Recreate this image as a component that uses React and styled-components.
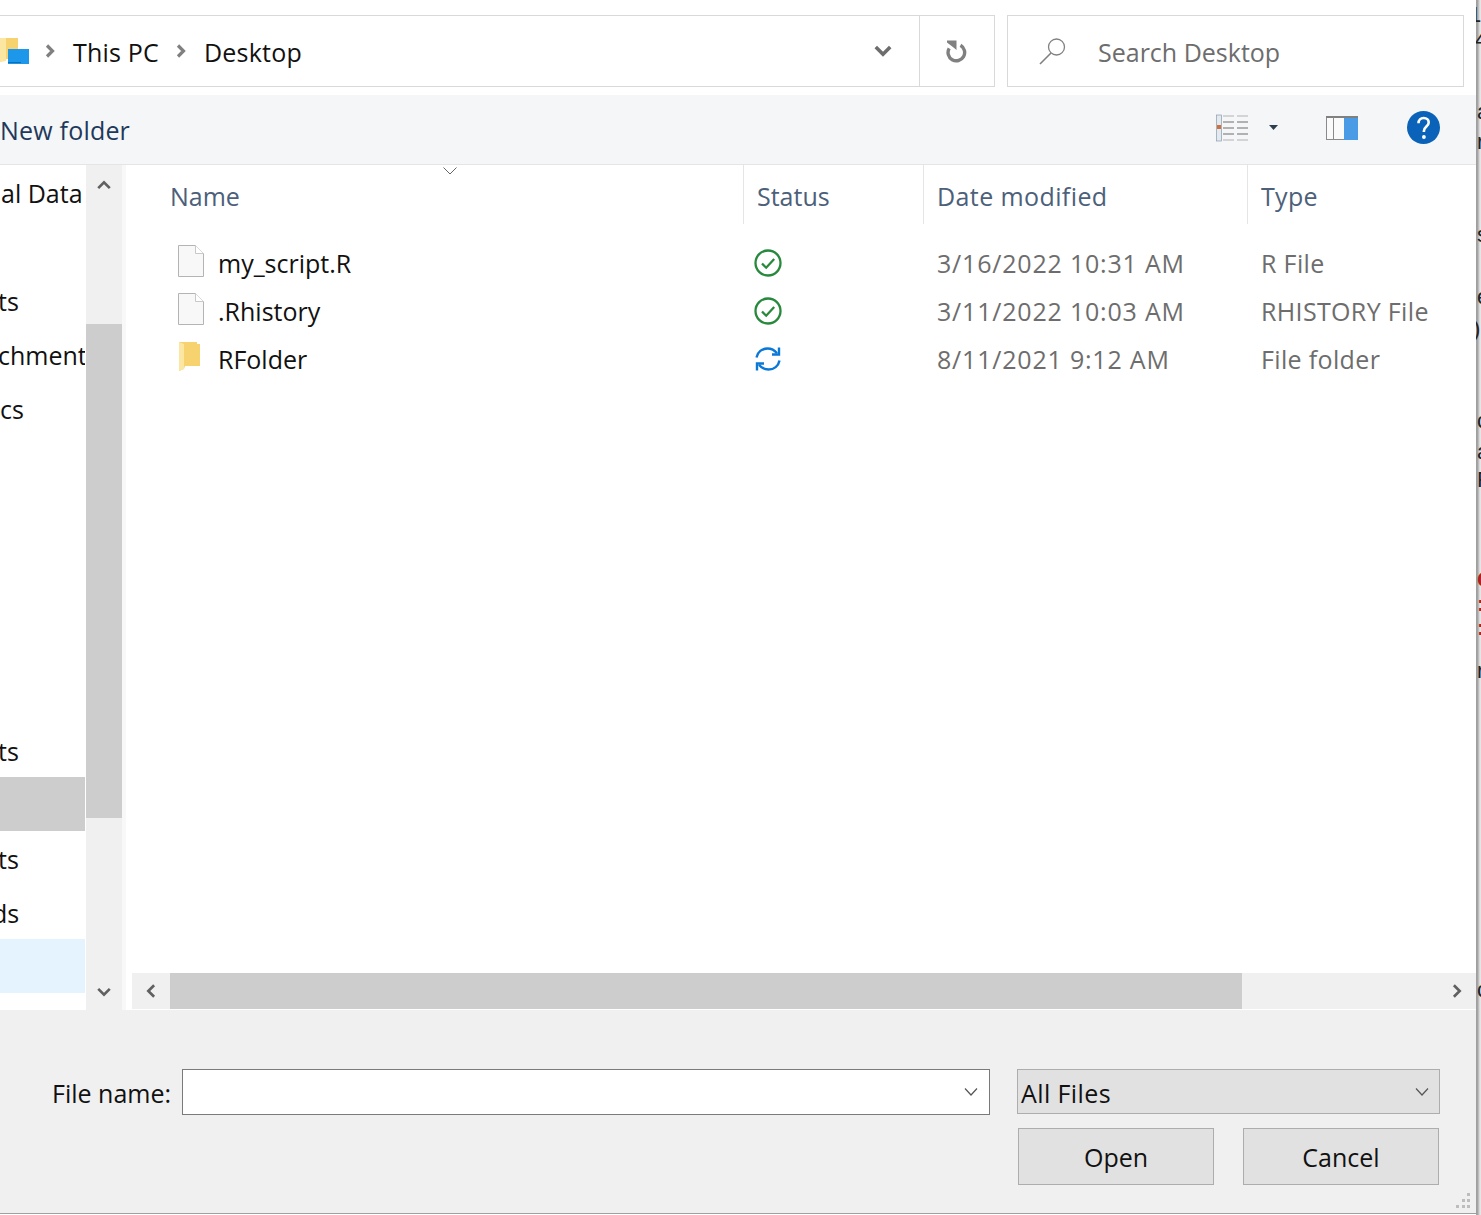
import React from "react";
import styled, { createGlobalStyle } from "styled-components";

const UI_FONT = `"Open Sans", "Noto Sans", sans-serif`;

const GlobalStyle = createGlobalStyle`
  html, body {
    margin: 0;
    padding: 0;
    background: #fff;
    overflow: hidden;
  }
  #root {
    width: 1481px;
    height: 1215px;
  }
`;

const Page = styled.div`
  display: flex;
  width: 1481px;
  height: 1215px;
  overflow: hidden;
  font-family: ${UI_FONT};
  font-size: 25px;
  color: #111;
`;

const Dialog = styled.div`
  width: 1476px;
  height: 1214px;
  display: flex;
  flex-direction: column;
  flex: none;
`;

/* window behind the dialog, only a sliver of it shows */
const BehindWindow = styled.div`
  width: 5px;
  flex: none;
  background: linear-gradient(to right, #9c9c9c 0, #a8a8a8 2px, #d2d2d2 3px, #ececec 5px);
  overflow: hidden;
  display: flex;
  flex-direction: column;
  font-family: "Liberation Sans", sans-serif;
  font-size: 22px;
  line-height: 24px;
`;

const BehindLetter = styled.span`
  display: block;
  height: 24px;
  margin-top: ${(p) => p.$gap}px;
  margin-left: ${(p) => p.$shift || 1}px;
  color: ${(p) => (p.$red ? "#b02020" : "#222")};
  font-weight: ${(p) => (p.$red ? 700 : 400)};
  white-space: nowrap;
`;

const AddressRow = styled.div`
  height: 95px;
  padding-top: 15px;
  box-sizing: border-box;
  display: flex;
  background: #fff;
  flex: none;
`;

const AddressBox = styled.div`
  width: 995px;
  height: 72px;
  box-sizing: border-box;
  border: 1px solid #d9d9d9;
  border-left: 0;
  display: flex;
  align-items: center;
`;

const Crumbs = styled.div`
  flex: 1;
  display: flex;
  align-items: center;
  min-width: 0;
`;

const CrumbText = styled.span`
  margin-left: ${(p) => p.$left}px;
  padding-top: 2px;
  letter-spacing: 0.2px;
`;

const CrumbArrow = styled.svg`
  width: 10px;
  height: 14px;
  margin-left: ${(p) => p.$left}px;
  flex: none;
`;

const ChevronCell = styled.div`
  width: 74px;
  display: flex;
  justify-content: center;
  padding-left: 2px;
  box-sizing: border-box;
`;

const RefreshCell = styled.div`
  width: 75px;
  height: 100%;
  box-sizing: border-box;
  border-left: 1px solid #d9d9d9;
  display: flex;
  align-items: center;
  justify-content: center;
`;

const SearchBox = styled.div`
  width: 457px;
  height: 72px;
  margin-left: 12px;
  box-sizing: border-box;
  border: 1px solid #d9d9d9;
  display: flex;
  align-items: center;
  padding-left: 30px;
  color: #6d6d6d;
  gap: 30px;
`;

const SearchText = styled.span`
  padding-top: 2px;
`;

const Toolbar = styled.div`
  height: 70px;
  flex: none;
  box-sizing: border-box;
  background: #f5f6f7;
  border-bottom: 1px solid #e5e5e5;
  display: flex;
  align-items: center;
  padding: 0 36px 0 0;
`;

const NewFolder = styled.span`
  color: #1e395b;
  flex: 1;
  letter-spacing: 0.2px;
`;

const ToolGroup = styled.div`
  display: flex;
  align-items: center;
  margin-bottom: 4px;
`;

const ToolIcon = styled.svg`
  flex: none;
  margin-left: ${(p) => p.$left}px;
`;

const Body = styled.div`
  flex: 1;
  display: flex;
  min-height: 0;
  background: #fff;
`;

const Sidebar = styled.div`
  width: 85px;
  flex: none;
  overflow: hidden;
  padding-top: 2px;
  box-sizing: border-box;
`;

const SideRow = styled.div`
  height: 54px;
  line-height: ${(p) => (p.$lower ? 56 : 52)}px;
  margin-top: ${(p) => p.$gap || 0}px;
  text-indent: ${(p) => p.$indent || 0}px;
  background: ${(p) => p.$bg || "transparent"};
  white-space: nowrap;
`;

const VScroll = styled.div`
  width: 36px;
  margin-left: 1px;
  flex: none;
  background: #f0f0f0;
  display: flex;
  flex-direction: column;
  justify-content: space-between;
  position: relative;
`;

const ScrollArrow = styled.div`
  height: 36px;
  display: flex;
  align-items: center;
  justify-content: center;
  flex: none;
  padding-top: ${(p) => p.$nudge || 0}px;
  box-sizing: border-box;
`;

const VThumb = styled.div`
  position: absolute;
  left: 0;
  right: 0;
  top: 159px;
  height: 494px;
  background: #cdcdcd;
`;

const Splitter = styled.div`
  width: 10px;
  flex: none;
  background: linear-gradient(to right, #f8f8f8 0, #f8f8f8 4px, #fff 4px);
`;

const ListPane = styled.div`
  flex: 1;
  min-width: 0;
  display: flex;
  flex-direction: column;
  position: relative;
`;

const SortCaret = styled.svg`
  position: absolute;
  left: 310px;
  top: 1px;
`;

const Columns = `612px 180px 324px 1fr`;

const HeaderRow = styled.div`
  display: grid;
  grid-template-columns: ${Columns};
  height: 59px;
  flex: none;
  color: #4c607a;
`;

const HeaderCell = styled.div`
  padding-left: ${(p) => p.$pad}px;
  padding-top: 14px;
  box-sizing: border-box;
  border-right: ${(p) => (p.$last ? "0" : "1px solid #e5e5e5")};
  line-height: 34px;
  letter-spacing: ${(p) => p.$spacing || 0}px;
`;

const FileRows = styled.div`
  flex: 1;
  padding-top: 15px;
`;

const FileRow = styled.div`
  display: grid;
  grid-template-columns: ${Columns};
  height: 48px;
  align-items: center;
`;

const NameCell = styled.div`
  display: flex;
  align-items: center;
  padding-left: 46px;
  gap: 14px;
  svg {
    margin-bottom: 4px;
  }
`;

const StatusCell = styled.div`
  display: flex;
  align-items: center;
  padding-left: 10px;
  height: 100%;
`;

const MutedCell = styled.div`
  color: #6d6d6d;
  padding-left: 13px;
  white-space: nowrap;
  letter-spacing: ${(p) => p.$spacing}px;
`;

const HScroll = styled.div`
  height: 36px;
  flex: none;
  background: #f0f0f0;
  display: flex;
  margin-bottom: 1px;
`;

const HArrow = styled.div`
  width: 38px;
  flex: none;
  display: flex;
  align-items: center;
  justify-content: center;
`;

const HThumb = styled.div`
  width: 1072px;
  flex: none;
  background: #cdcdcd;
`;

const HRest = styled.div`
  flex: 1;
`;

const Footer = styled.div`
  height: 204px;
  flex: none;
  box-sizing: border-box;
  background: #f0f0f0;
  border-bottom: 1px solid #a0a0a0;
  padding: 59px 36px 0 52px;
  position: relative;
`;

const FieldRow = styled.div`
  display: flex;
  align-items: flex-start;
`;

const FieldLabel = styled.span`
  width: 130px;
  line-height: 48px;
  white-space: nowrap;
`;

const Combo = styled.div`
  width: 808px;
  height: 46px;
  box-sizing: border-box;
  border: 1px solid #7a7a7a;
  background: #fff;
  display: flex;
  align-items: center;
  justify-content: flex-end;
  padding-right: 10px;
`;

const TypeSelect = styled.div`
  width: 423px;
  height: 45px;
  margin-left: 27px;
  box-sizing: border-box;
  border: 1px solid #adadad;
  background: #e1e1e1;
  display: flex;
  align-items: center;
  justify-content: space-between;
  padding: 0 9px 0 3px;
`;

const TypeText = styled.span`
  padding-top: 2px;
  letter-spacing: 0.4px;
`;

const ButtonRow = styled.div`
  display: flex;
  justify-content: flex-end;
  gap: 29px;
  margin-top: 11px;
  padding-right: 1px;
`;

const DialogButton = styled.div`
  width: 196px;
  height: 57px;
  box-sizing: border-box;
  border: 1px solid #adadad;
  background: #e1e1e1;
  display: flex;
  align-items: center;
  justify-content: center;
`;

const Grip = styled.svg`
  position: absolute;
  right: 4px;
  bottom: 3px;
`;

const Chevron = ({ dir = "down", size = 18, color = "#666", width = 3 }) => {
  const rot = { down: 0, up: 180, left: 90, right: -90 }[dir];
  return (
    <svg width={size} height={size} viewBox="0 0 18 18" style={{ transform: `rotate(${rot}deg)` }}>
      <path d="M2.5 5.5 9 12l6.5-6.5" fill="none" stroke={color} strokeWidth={width} />
    </svg>
  );
};

const ThinChevron = () => (
  <svg width="16" height="10" viewBox="0 0 16 10">
    <path d="M2 1.5 8 8l6-6.5" fill="none" stroke="#555" strokeWidth="1.2" />
  </svg>
);

const CrumbGlyph = ({ left }) => (
  <CrumbArrow $left={left} viewBox="0 0 10 14">
    <path d="M2 1.5 7.5 7 2 12.5" fill="none" stroke="#808080" strokeWidth="3.2" />
  </CrumbArrow>
);

const DesktopFolder = () => (
  <svg width="29" height="29" viewBox="0 0 29 29" style={{ flex: "none" }}>
    <path d="M0 1h18v21H7l-7 3z" fill="#f6d36e" />
    <path d="M0 1h6v23l-6 1z" fill="#fbe6a2" />
    <rect x="8" y="12" width="21" height="15" fill="#1c97ea" />
    <rect x="8" y="25" width="13" height="1" fill="#0f6cb5" />
  </svg>
);

const RefreshIcon = () => (
  <svg width="22" height="24" viewBox="0 0 22 24">
    <path d="M14.5 6.3a8.3 8.3 0 1 1-11.3 3" fill="none" stroke="#808080" strokeWidth="3.4" />
    <path d="M1 1.5h9.5V11L7.5 8.5 1 3.5z" fill="#808080" />
  </svg>
);

const SearchIcon = () => (
  <svg width="30" height="30" viewBox="0 0 30 30" style={{ flex: "none" }}>
    <circle cx="18.5" cy="11" r="8" fill="none" stroke="#808080" strokeWidth="1.3" />
    <path d="M13 17 2 28" stroke="#808080" strokeWidth="1.6" />
  </svg>
);

const ViewIcon = () => (
  <ToolIcon $left={0} width="32" height="28" viewBox="0 0 32 28">
    <rect x="0.5" y="1" width="5" height="26" fill="#e4e9ef" stroke="#8b9bab" strokeWidth="0.7" />
    <rect x="1" y="11" width="4" height="4" fill="#d0703c" />
    {[2, 8, 14, 20, 26].map((y, i) => (
      <g key={y} stroke={i === 0 || i === 4 ? "#c8c8c8" : "#9a9a9a"} strokeWidth="1.5">
        <path d={`M7 ${y}h11`} />
        <path d={`M21 ${y}h11`} />
      </g>
    ))}
  </ToolIcon>
);

const DropCaret = () => (
  <ToolIcon $left={21} width="9" height="5" viewBox="0 0 9 5">
    <path d="M0 0h9L4.5 5z" fill="#2c3e50" />
  </ToolIcon>
);

const PreviewIcon = () => (
  <ToolIcon $left={48} width="32" height="24" viewBox="0 0 32 24">
    <rect x="0.5" y="0.5" width="31" height="23" fill="#fafafa" stroke="#8a8a8a" />
    <rect x="0" y="0" width="32" height="2" fill="#808080" />
    <path d="M7.5 1v22" stroke="#8a8a8a" />
    <rect x="18" y="2" width="14" height="22" fill="#4a9be6" />
  </ToolIcon>
);

const HelpIcon = () => (
  <ToolIcon $left={49} width="33" height="33" viewBox="0 0 33 33">
    <circle cx="16.5" cy="16.5" r="16.5" fill="#0a63b8" />
    <path d="M11.5 12.2c0-3.2 2.2-5.2 5.2-5.2 3 0 5 1.8 5 4.4 0 4-4.8 4.2-4.8 8.6v1" fill="none" stroke="#fff" strokeWidth="2.6" />
    <circle cx="16.9" cy="26" r="1.9" fill="#fff" />
  </ToolIcon>
);

const FileIcon = () => (
  <svg width="26" height="32" viewBox="0 0 26 32" style={{ flex: "none" }}>
    <path d="M.5.5h17l8 8v23H.5z" fill="#f8f8f8" stroke="#b4b4b4" />
    <path d="M17.5.5v8h8" fill="#fff" stroke="#c8c8c8" />
  </svg>
);

const FolderIcon = () => (
  <svg width="26" height="32" viewBox="0 0 26 32" style={{ flex: "none" }}>
    <path d="M1 1h18v2h3v22H7l-1 3-5 2z" fill="#f6d36e" />
    <path d="M1 1l5 2v25l-5 2z" fill="#fbe6a2" />
  </svg>
);

const SyncedIcon = () => (
  <svg width="28" height="28" viewBox="0 0 28 28">
    <circle cx="14" cy="14" r="12.5" fill="none" stroke="#27893c" strokeWidth="2.3" />
    <path d="M8 14.5l4.2 4.2L20.2 10" fill="none" stroke="#27893c" strokeWidth="2.3" />
  </svg>
);

const SyncingIcon = () => (
  <svg width="28" height="28" viewBox="0 0 28 28">
    <g fill="none" stroke="#0a78d7" strokeWidth="2.4">
      <path d="M2.5 12.5C3.5 7 8 3.5 13.5 3.5c4 0 7.2 1.8 9.5 4.8" />
      <path d="M25 2.5v7h-7" />
      <path d="M25.5 15.5c-1 5.5-5.5 9-11 9-4 0-7.2-1.8-9.500-4.800" />
      <path d="M3 25.5v-7h7" />
    </g>
  </svg>
);

const sideRows = [
  { text: "al Data", indent: 1 },
  { text: "" },
  { text: "ts", indent: -2 },
  { text: "chments", indent: -2 },
  { text: "cs" },
  { text: "ts", gap: 286, indent: -2, lower: true },
  { text: "", bg: "#cdcdcd" },
  { text: "ts", indent: -2, lower: true },
  { text: "ds", indent: -8, lower: true },
  { text: "", bg: "#e5f3ff" },
];

const files = [
  { name: "my_script.R", date: "3/16/2022 10:31 AM", type: "R File", icon: <FileIcon />, status: <SyncedIcon /> },
  { name: ".Rhistory", date: "3/11/2022 10:03 AM", type: "RHISTORY File", icon: <FileIcon />, status: <SyncedIcon /> },
  { name: "RFolder", date: "8/11/2021 9:12 AM", type: "File folder", icon: <FolderIcon />, status: <SyncingIcon /> },
];

const behind = [
  { ch: "1", gap: 3, shift: -7 },
  { ch: "4", gap: 1, shift: -1 },
  { ch: "a", gap: 48 },
  { ch: "r", gap: 6 },
  { ch: "s", gap: 69 },
  { ch: "e", gap: 38 },
  { ch: ")", gap: 8, shift: -3 },
  { ch: "c", gap: 68 },
  { ch: "a", gap: 7 },
  { ch: "R", gap: 4 },
  { ch: "G", gap: 76, red: true },
  { ch: ":", gap: 0, red: true },
  { ch: ":", gap: 0, red: true },
  { ch: "r", gap: 19 },
  { ch: "c", gap: 295 },
];

const App = () => {
  return (
    <>
      <GlobalStyle />
      <Page>
        <Dialog>
          <AddressRow>
            <AddressBox>
              <Crumbs>
                <DesktopFolder />
                <CrumbGlyph left={16} />
                <CrumbText $left={18}>This PC</CrumbText>
                <CrumbGlyph left={17} />
                <CrumbText $left={18}>Desktop</CrumbText>
              </Crumbs>
              <ChevronCell>
                <Chevron size={20} color="#6d6d6d" width={3.2} />
              </ChevronCell>
              <RefreshCell>
                <RefreshIcon />
              </RefreshCell>
            </AddressBox>
            <SearchBox>
              <SearchIcon />
              <SearchText>Search Desktop</SearchText>
            </SearchBox>
          </AddressRow>

          <Toolbar>
            <NewFolder>New folder</NewFolder>
            <ToolGroup>
              <ViewIcon />
              <DropCaret />
              <PreviewIcon />
              <HelpIcon />
            </ToolGroup>
          </Toolbar>

          <Body>
            <Sidebar>
              {sideRows.map((row, i) => (
                <SideRow key={i} $gap={row.gap} $bg={row.bg} $indent={row.indent} $lower={row.lower}>
                  {row.text}
                </SideRow>
              ))}
            </Sidebar>
            <VScroll>
              <VThumb />
              <ScrollArrow $nudge={4}>
                <Chevron dir="up" size={16} color="#606060" width={3} />
              </ScrollArrow>
              <ScrollArrow>
                <Chevron dir="down" size={16} color="#606060" width={3} />
              </ScrollArrow>
            </VScroll>
            <Splitter />
            <ListPane>
              <SortCaret width="16" height="10" viewBox="0 0 16 10">
                <path d="M1.5 1.5 8 8l6.5-6.5" fill="none" stroke="#666" strokeWidth="1" />
              </SortCaret>
              <HeaderRow>
                <HeaderCell $pad={38}>Name</HeaderCell>
                <HeaderCell $pad={13}>Status</HeaderCell>
                <HeaderCell $pad={13} $spacing={0.4}>Date modified</HeaderCell>
                <HeaderCell $pad={13} $last $spacing={0.3}>Type</HeaderCell>
              </HeaderRow>
              <FileRows>
                {files.map((file) => (
                  <FileRow key={file.name}>
                    <NameCell>
                      {file.icon}
                      <span>{file.name}</span>
                    </NameCell>
                    <StatusCell>{file.status}</StatusCell>
                    <MutedCell $spacing={0.8}>{file.date}</MutedCell>
                    <MutedCell $spacing={0.35}>{file.type}</MutedCell>
                  </FileRow>
                ))}
              </FileRows>
              <HScroll>
                <HArrow>
                  <Chevron dir="left" size={16} color="#606060" width={3} />
                </HArrow>
                <HThumb />
                <HRest />
                <HArrow>
                  <Chevron dir="right" size={16} color="#606060" width={3} />
                </HArrow>
              </HScroll>
            </ListPane>
          </Body>

          <Footer>
            <FieldRow>
              <FieldLabel>File name:</FieldLabel>
              <Combo>
                <ThinChevron />
              </Combo>
              <TypeSelect>
                <TypeText>All Files</TypeText>
                <ThinChevron />
              </TypeSelect>
            </FieldRow>
            <ButtonRow>
              <DialogButton>Open</DialogButton>
              <DialogButton>Cancel</DialogButton>
            </ButtonRow>
            <Grip width="18" height="18" viewBox="0 0 18 18">
              <g fill="#bdbdbd">
                <rect x="13" y="1" width="3" height="3" />
                <rect x="8" y="7" width="3" height="3" />
                <rect x="13" y="7" width="3" height="3" />
                <rect x="2" y="13" width="3" height="3" />
                <rect x="8" y="13" width="3" height="3" />
                <rect x="13" y="13" width="3" height="3" />
              </g>
            </Grip>
          </Footer>
        </Dialog>
        <BehindWindow>
          {behind.map((b, i) => (
            <BehindLetter key={i} $gap={b.gap} $red={b.red} $shift={b.shift}>
              {b.ch}
            </BehindLetter>
          ))}
        </BehindWindow>
      </Page>
    </>
  );
};

export default App;
